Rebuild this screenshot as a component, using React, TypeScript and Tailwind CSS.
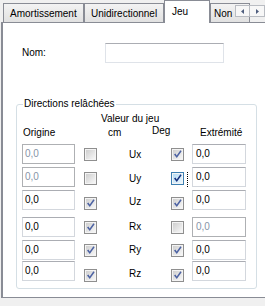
import { clsx } from 'clsx'

const ROWS = [
  { h: 'h-[23px]', cb: 'mt-[4px]', lbl: 'mt-[4px]', left: false, c1: false, name: 'Ux', c2: true, right: true },
  { h: 'h-[23px]', cb: 'mt-[5px]', lbl: 'mt-[5px]', left: false, c1: false, name: 'Uy', c2: true, right: true, focus: true },
  { h: 'h-[27px]', cb: 'mt-[7px]', lbl: 'mt-[5px]', left: true, c1: true, name: 'Uz', c2: true, right: true },
  { h: 'h-[23px]', cb: 'mt-[4px]', lbl: 'mt-[3px]', left: true, c1: true, name: 'Rx', c2: false, right: false },
  { h: 'h-[21px]', cb: 'mt-[4px]', lbl: 'mt-[3px]', left: true, c1: true, name: 'Ry', c2: true, right: true },
  { h: 'h-[21px]', cb: 'mt-[8px]', lbl: 'mt-[6px]', left: true, c1: true, name: 'Rz', c2: true, right: true },
]

function Field({ enabled, className }: { enabled: boolean; className: string }) {
  return (
    <div
      className={clsx(
        'h-[20px] flex items-center border bg-white',
        enabled
          ? 'border-[#d3d7dd] border-t-[#abadb3] text-black'
          : 'border-[#aeb0b3] text-[#8794a8]',
        className,
      )}
    >
      0,0
    </div>
  )
}

function CheckBox({ checked, focused, className }: { checked: boolean; focused?: boolean; className: string }) {
  return (
    <div className={clsx('relative shrink-0', className)}>
      <div
        className={clsx(
          'relative w-[13px] h-[13px] border p-[1px] bg-[#f4f4f4]',
          focused ? 'border-[#3c7fb1]' : 'border-[#8f8f8f]',
        )}
      >
        <div
          className={clsx(
            'w-[9px] h-[9px] bg-linear-to-br',
            focused ? 'from-[#b6dcf4] to-[#eaf6fd]' : 'from-[#cfcfcf] to-[#f7f7f7]',
          )}
        />
        {checked && (
          <svg width="11" height="11" viewBox="0 0 11 11" className="absolute left-0 top-0">
            <path
              d="M2 5.6 L3.4 4.6 L4.7 6.5 L8.4 1.2 L9.6 2.2 L4.8 9 Z"
              fill={focused ? '#16307e' : '#4c62a3'}
            />
          </svg>
        )}
      </div>
      {focused && (
        <div className="absolute left-[16px] top-0 h-[15px] border-l border-dotted border-black" />
      )}
    </div>
  )
}

function Tab({ label, className, selected }: { label: string; className: string; selected?: boolean }) {
  return (
    <div
      className={clsx(
        'shrink-0 border-x border-t border-[#898c95] whitespace-nowrap overflow-hidden',
        selected
          ? 'relative z-10 h-[23px] bg-white pt-[4px]'
          : 'mt-[3px] h-[19px] bg-linear-to-b from-[#f3f3f3] to-[#e1e1e1] pt-[3px]',
        className,
      )}
    >
      {label}
    </div>
  )
}

export default function App() {
  return (
    <div className="w-[265px] h-[306px] overflow-hidden bg-[#f0f0f0] font-['Liberation_Sans',Arial,sans-serif] text-[10px] leading-[14px] text-black">
      {/* Tab strip */}
      <div className="relative flex items-start h-[22px] pl-[3px]">
        <Tab label="Amortissement" className="w-[81px] pl-[6px]" />
        <Tab label="Unidirectionnel" className="w-[80px] pl-[6px]" />
        <Tab label="Jeu" selected className="w-[46px] pl-[7px]" />
        <Tab label="Non" className="w-[40px] pl-[3px]" />
        <div className="absolute left-[235px] top-[5px] flex">
          <div className="w-[15px] h-[12px] border border-[#b9bcc2] bg-[#f7f7f7] flex items-center justify-center">
            <svg width="3" height="5" viewBox="0 0 3 5">
              <path d="M3 0 L0 2.5 L3 5 Z" fill="#4f5e7e" />
            </svg>
          </div>
          <div className="w-[15px] h-[12px] border border-l-0 border-[#b9bcc2] bg-[#f7f7f7] flex items-center justify-center">
            <svg width="3" height="5" viewBox="0 0 3 5">
              <path d="M0 0 L3 2.5 L0 5 Z" fill="#4f5e7e" />
            </svg>
          </div>
        </div>
      </div>

      {/* Page */}
      <div className="ml-[1px] w-[270px] h-[276px] bg-white border-t border-b border-l-2 border-[#898c95]">
        <div className="flex items-center h-[20px] mt-[20px] pl-[19px]">
          <span className="w-[83px]">Nom:</span>
          <div className="w-[119px] h-[20px] border border-[#dfe3e9] border-t-[#abadb3]" />
        </div>

        <div className="relative ml-[13px] mt-[41px] w-[241px] h-[185px] border border-[#d5dfe5] rounded-[3px]">
          <span className="absolute left-[6px] -top-[8px] px-[1px] bg-white">Directions relâchées</span>

          <div className="mt-[7px] pl-[84px]">Valeur du jeu</div>
          <div className="flex items-start h-[14px] pl-[6px]">
            <span className="w-[85px]">Origine</span>
            <span className="w-[44px]">cm</span>
            <span className="w-[48px] -mt-[2px]">Deg</span>
            <span>Extrémité</span>
          </div>

          <div className="mt-[4px]">
            {ROWS.map((r) => (
              <div key={r.name} className={clsx('flex items-start', r.h)}>
                <Field enabled={r.left} className="ml-[5px] w-[53px] pl-[2px]" />
                <CheckBox checked={r.c1} className={clsx('ml-[9px]', r.cb)} />
                <span className={clsx('ml-[32px] w-[42px]', r.lbl)}>{r.name}</span>
                <CheckBox checked={r.c2} focused={r.focus} className={r.cb} />
                <Field enabled={r.right} className="ml-[8px] w-[54px] pl-[3px]" />
              </div>
            ))}
          </div>
        </div>
      </div>
    </div>
  )
}
